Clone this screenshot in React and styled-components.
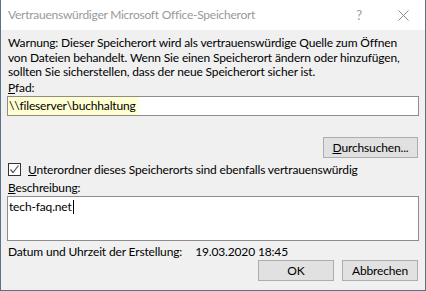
import styled, { createGlobalStyle } from "styled-components";

const GlobalStyle = createGlobalStyle`
  html, body {
    margin: 0;
    padding: 0;
    background: #ffffff;
  }
  * {
    box-sizing: border-box;
  }
`;

export default function App() {
  return (
    <>
      <GlobalStyle />
      <Window>
        <TitleBar>
          <Title>Vertrauenswürdiger Microsoft Office-Speicherort</Title>
          <TitleButtons>
            <HelpGlyph>?</HelpGlyph>
            <CloseIcon viewBox="0 0 11 11">
              <line x1="0.5" y1="0.5" x2="10.5" y2="10.5" />
              <line x1="10.5" y1="0.5" x2="0.5" y2="10.5" />
            </CloseIcon>
          </TitleButtons>
        </TitleBar>
        <Body>
          <Warning>
            <Line>Warnung: Dieser Speicherort wird als vertrauenswürdige Quelle zum Öffnen</Line>
            <Line>von Dateien behandelt. Wenn Sie einen Speicherort ändern oder hinzufügen,</Line>
            <Line>sollten Sie sicherstellen, dass der neue Speicherort sicher ist.</Line>
          </Warning>
          <Label mt={0}>
            <u>P</u>fad:
          </Label>
          <Field mt={1.5} height={20}>
            <Highlight>\\fileserver\buchhaltung</Highlight>
          </Field>
          <ButtonRow mt={21} justify="flex-end">
            <Button width={95}>
              <u>D</u>urchsuchen...
            </Button>
          </ButtonRow>
          <CheckRow>
            <CheckBox>
              <svg viewBox="0 0 11 11" width="11" height="11">
                <polyline points="1.5,5.5 4,8.5 9.5,1.5" />
              </svg>
            </CheckBox>
            <span>
              <u>U</u>nterordner dieses Speicherorts sind ebenfalls vertrauenswürdig
            </span>
          </CheckRow>
          <Label mt={4}>
            <u>B</u>eschreibung:
          </Label>
          <Field mt={1} height={45} top>
            tech-faq.net
            <Caret />
          </Field>
          <InfoRow>
            <span>Datum und Uhrzeit der Erstellung:</span>
            <InfoValue>19.03.2020 18:45</InfoValue>
          </InfoRow>
          <ButtonRow mt={2} justify="flex-end" gap={8}>
            <Button width={76}>OK</Button>
            <Button width={76}>Abbrechen</Button>
          </ButtonRow>
        </Body>
      </Window>
    </>
  );
}

const Window = styled.div`
  width: 426px;
  height: 291px;
  display: flex;
  flex-direction: column;
  border-left: 1px solid #5a7189;
  border-right: 1px solid #5a7189;
  border-bottom: 1px solid #5a7189;
  background: #f0f0f0;
  font-family: Lato, "Noto Sans", sans-serif;
  font-size: 12px;
  letter-spacing: -0.15px;
  color: #000000;
  overflow: hidden;
`;

const TitleBar = styled.div`
  height: 30px;
  flex: none;
  display: flex;
  align-items: center;
  justify-content: space-between;
  background: #ffffff;
  padding-left: 7px;
  padding-right: 16px;
`;

const Title = styled.div`
  color: #999999;
  font-size: 12px;
  letter-spacing: -0.25px;
  line-height: 30px;
`;

const TitleButtons = styled.div`
  display: flex;
  align-items: center;
  gap: 36px;
`;

const HelpGlyph = styled.span`
  color: #999999;
  font-size: 13px;
  line-height: 13px;
`;

const CloseIcon = styled.svg`
  width: 11px;
  height: 11px;
  stroke: #8a8a8a;
  stroke-width: 1;
`;

const Body = styled.div`
  flex: 1;
  display: flex;
  flex-direction: column;
  padding: 0 6px;
`;

const Warning = styled.div`
  margin-top: 6px;
  padding-left: 1px;
  line-height: 14.5px;
`;

const Line = styled.div`
  white-space: nowrap;
`;

const Label = styled.div`
  margin-top: ${(p) => p.mt}px;
  padding-left: 1px;
  line-height: 15px;
`;

const Field = styled.div`
  margin-top: ${(p) => p.mt}px;
  height: ${(p) => p.height}px;
  flex: none;
  background: #ffffff;
  border: 1px solid #8c8c8c;
  display: flex;
  align-items: ${(p) => (p.top ? "flex-start" : "center")};
  padding: ${(p) => (p.top ? "3px 0 0 1px" : "0")};
  line-height: 14px;
`;

const Highlight = styled.span`
  background: #ffffd2;
  height: 100%;
  display: flex;
  align-items: center;
  padding: 0 3px 0 1px;
`;

const Caret = styled.span`
  display: inline-block;
  width: 1px;
  height: 14px;
  background: #000000;
  margin-left: 1px;
`;

const ButtonRow = styled.div`
  margin-top: ${(p) => p.mt}px;
  display: flex;
  justify-content: ${(p) => p.justify};
  gap: ${(p) => p.gap || 0}px;
  padding-right: 1px;
`;

const Button = styled.div`
  width: ${(p) => p.width}px;
  height: 21px;
  flex: none;
  background: #e1e1e1;
  border: 1px solid #adadad;
  display: flex;
  align-items: center;
  justify-content: center;
  line-height: 13px;
`;

const CheckRow = styled.div`
  margin-top: 5px;
  display: flex;
  align-items: center;
  gap: 7px;
  padding-left: 1px;
  line-height: 13px;
`;

const CheckBox = styled.div`
  width: 13px;
  height: 13px;
  flex: none;
  border: 1px solid #333333;
  background: #ffffff;
  display: flex;
  align-items: center;
  justify-content: center;
  svg {
    fill: none;
    stroke: #555555;
    stroke-width: 1.2;
  }
`;

const InfoRow = styled.div`
  margin-top: 4px;
  padding-left: 1px;
  display: flex;
  line-height: 13px;
`;

const InfoValue = styled.span`
  margin-left: 13px;
`;
